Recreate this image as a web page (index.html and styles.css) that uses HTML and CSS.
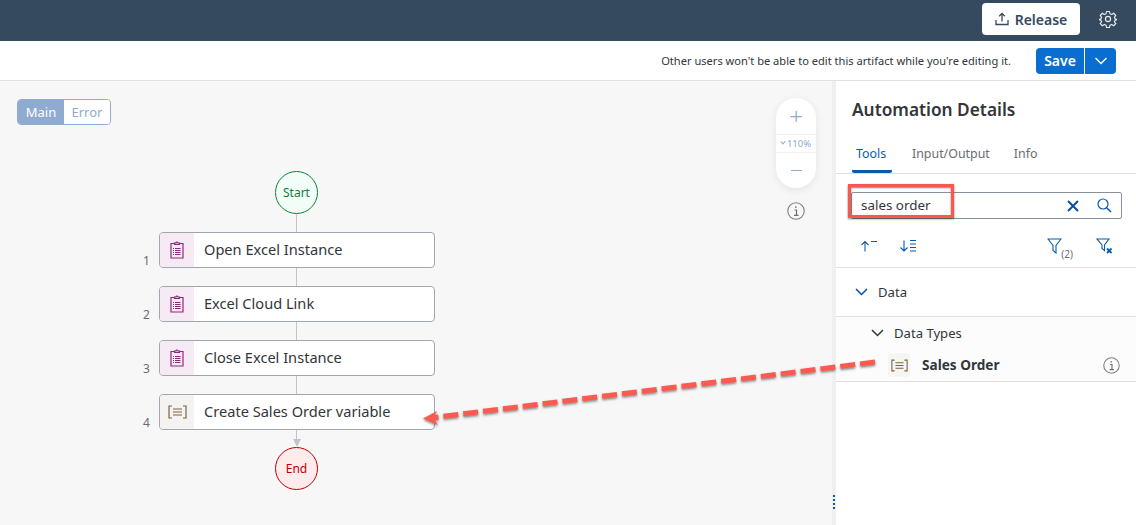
FILE: index.html
```html
<!DOCTYPE html>
<html lang="en">

<head>
    <meta charset="utf-8">
    <title>Automation Details</title>
    <link rel="stylesheet" href="styles.css">
</head>

<body>
    <header class="shell">
        <button class="release">
            <svg width="14" height="14" viewBox="0 0 14 14" fill="none" stroke="#354a5f" stroke-width="1.3">
                <path d="M7 9.5V1.5M4.2 4.2 7 1.4l2.8 2.8M1 8v4.5h12V8" />
            </svg>
            Release
        </button>
        <svg class="gear" width="18" height="18" viewBox="0 0 24 24" fill="none" stroke="#e6eaee" stroke-width="1.6">
            <circle cx="12" cy="12" r="3.4" />
            <path d="M10 2h4l.6 3 2.3 1 2.6-1.7 2.8 3-1.7 2.5.9 2.2 3 .6v0l-3 .9-.9 2.2 1.7 2.5-2.8 2.8-2.6-1.7-2.3 1-.6 3h-4l-.6-3-2.3-1-2.6 1.7-2.8-2.8 1.7-2.5-.9-2.2-3-.9 3-.6.9-2.2L1.700 7.300l2.800-3 2.600 1.700 2.300-1z" stroke-linejoin="round" />
        </svg>
    </header>

    <div class="toolbar">
        <span class="notice">Other users won't be able to edit this artifact while you're editing it.</span>
        <div class="save-group">
            <button class="save">Save</button>
            <button class="save-menu">
                <svg width="14" height="8" viewBox="0 0 14 8" fill="none" stroke="#fff" stroke-width="1.4">
                    <path d="M1.500 1 7 6.500 12.500 1" />
                </svg>
            </button>
        </div>
    </div>

    <main class="workspace">
        <section class="canvas">
            <div class="switch">
                <span class="switch-on">Main</span>
                <span class="switch-off">Error</span>
            </div>

            <div class="zoom">
                <span class="zoom-btn zoom-plus">+</span>
                <span class="zoom-level"><i class="zoom-caret"></i>110%</span>
                <span class="zoom-btn zoom-minus"></span>
            </div>
            <svg class="canvas-info" width="18" height="18" viewBox="0 0 18 18">
                <circle cx="9" cy="9" r="8.200" fill="none" stroke="#7f7f7f" stroke-width="1.100" />
                <path d="M7.500 8h2v5M7 13.300h4.500M8 5.200h1.600" fill="none" stroke="#6a6d70" stroke-width="1.200" />
            </svg>

            <div class="flow">
                <div class="terminal terminal-start">Start</div>
                <div class="link"></div>
                <div class="step">
                    <span class="step-no">1</span>
                    <span class="step-icon step-icon-excel">
                        <svg width="14" height="18" viewBox="0 0 14 18" fill="none" stroke="#8d2a7b" stroke-width="1.200">
                            <path d="M4.500 2.500H1v14.500h12V2.500H9.500M4.500 3.500V2h1.500a1 1 0 0 1 2 0h1.500v1.500zM5 7.500h5.500M5 9.500h5.500M5 11.500h5.500M5 13.500h5.500M3 7.500h1M3 9.500h1M3 11.500h1M3 13.500h1" />
                        </svg>
                    </span>
                    <span class="step-label">Open Excel Instance</span>
                </div>
                <div class="link"></div>
                <div class="step">
                    <span class="step-no">2</span>
                    <span class="step-icon step-icon-excel">
                        <svg width="14" height="18" viewBox="0 0 14 18" fill="none" stroke="#8d2a7b" stroke-width="1.200">
                            <path d="M4.500 2.500H1v14.500h12V2.500H9.500M4.500 3.500V2h1.500a1 1 0 0 1 2 0h1.500v1.500zM5 7.500h5.500M5 9.500h5.500M5 11.500h5.500M5 13.500h5.500M3 7.500h1M3 9.500h1M3 11.500h1M3 13.500h1" />
                        </svg>
                    </span>
                    <span class="step-label">Excel Cloud Link</span>
                </div>
                <div class="link"></div>
                <div class="step">
                    <span class="step-no">3</span>
                    <span class="step-icon step-icon-excel">
                        <svg width="14" height="18" viewBox="0 0 14 18" fill="none" stroke="#8d2a7b" stroke-width="1.200">
                            <path d="M4.500 2.500H1v14.500h12V2.500H9.500M4.500 3.500V2h1.500a1 1 0 0 1 2 0h1.500v1.500zM5 7.500h5.500M5 9.500h5.500M5 11.500h5.500M5 13.500h5.500M3 7.500h1M3 9.500h1M3 11.500h1M3 13.500h1" />
                        </svg>
                    </span>
                    <span class="step-label">Close Excel Instance</span>
                </div>
                <div class="link"></div>
                <div class="step">
                    <span class="step-no">4</span>
                    <span class="step-icon step-icon-data">
                        <svg width="19" height="14" viewBox="0 0 19 14" fill="none" stroke="#7d6340" stroke-width="1.200">
                            <path d="M4 1H1v12h3M15 1h3v12h-3M5 4h9M5 7h9M5 10h9" />
                        </svg>
                    </span>
                    <span class="step-label">Create Sales Order variable</span>
                </div>
                <div class="link link-last"></div>
                <div class="link-head"></div>
                <div class="terminal terminal-end">End</div>
            </div>

            <div class="grip"><i></i><i></i><i></i><i></i></div>
        </section>

        <aside class="details">
            <h2 class="details-title">Automation Details</h2>
            <nav class="tabs">
                <span class="tab tab-active">Tools</span>
                <span class="tab">Input/Output</span>
                <span class="tab">Info</span>
            </nav>

            <div class="search">
                <span class="search-text">sales order</span>
                <svg width="12" height="12" viewBox="0 0 12 12" fill="none" stroke="#0a4f9e" stroke-width="2">
                    <path d="M1 1l10 10M11 1 1 11" />
                </svg>
                <svg class="search-glass" width="15" height="15" viewBox="0 0 15 15" fill="none" stroke="#0a5cab" stroke-width="1.200">
                    <circle cx="6" cy="6" r="5" />
                    <path d="M9.700 9.700 14 14" stroke-width="1.600" />
                </svg>
            </div>

            <div class="tools">
                <svg width="18" height="12" viewBox="0 0 18 12" fill="none" stroke="#0a5cab" stroke-width="1.100">
                    <path d="M5 11.500V2M1.500 5 5 1.500 8.500 5M11 1.500h6" />
                </svg>
                <svg class="tool-sort" width="18" height="14" viewBox="0 0 18 14" fill="none" stroke="#0a5cab" stroke-width="1.100">
                    <path d="M5 1.500V12M1.500 8.500 5 12l3.500-3.500M11 1.500h6M11 5h6M11 8.500h6M11 12h6" />
                </svg>
                <span class="tools-gap"></span>
                <span class="tool-filter">
                    <svg width="15" height="16" viewBox="0 0 15 16" fill="none" stroke="#0a5cab" stroke-width="1.100">
                        <path d="M1 1h13L9 7.500V15L6 12.500v-5z" />
                    </svg>
                    <small>(2)</small>
                </span>
                <svg class="tool-clear" width="17" height="16" viewBox="0 0 17 16" fill="none" stroke="#0a5cab" stroke-width="1.100">
                    <path d="M1 1h12L8.500 7v5.500L6 10.500V7z" />
                    <path d="M11 10.500l4.500 4.500M15.500 10.500 11 15" stroke-width="1.800" />
                </svg>
            </div>

            <div class="group">
                <svg width="13" height="8" viewBox="0 0 13 8" fill="none" stroke="#0a4f9e" stroke-width="1.500">
                    <path d="M1 1l5.500 5.500L12 1" />
                </svg>
                <span>Data</span>
            </div>

            <div class="subgroup">
                <div class="subgroup-head">
                    <svg width="13" height="8" viewBox="0 0 13 8" fill="none" stroke="#32363a" stroke-width="1.500">
                        <path d="M1 1l5.500 5.500L12 1" />
                    </svg>
                    <span>Data Types</span>
                </div>
                <div class="subgroup-item">
                    <span class="item-icon">
                        <svg width="17" height="13" viewBox="0 0 19 14" fill="none" stroke="#7d6340" stroke-width="1.200">
                            <path d="M4 1H1v12h3M15 1h3v12h-3M5 4h9M5 7h9M5 10h9" />
                        </svg>
                    </span>
                    <span class="item-label">Sales Order</span>
                    <svg width="17" height="17" viewBox="0 0 18 18">
                        <circle cx="9" cy="9" r="8.200" fill="none" stroke="#7f7f7f" stroke-width="1.100" />
                        <path d="M7.500 8h2v5M7 13.300h4.500M8 5.200h1.600" fill="none" stroke="#6a6d70" stroke-width="1.200" />
                    </svg>
                </div>
            </div>
        </aside>
    </main>

    <div class="callout-box"></div>
    <svg class="callout-arrow" width="1136" height="525" viewBox="0 0 1136 525" fill="none">
        <defs>
            <filter id="arrow-shadow" x="-5%" y="-30%" width="110%" height="170%">
                <feDropShadow dx="0" dy="1.500" stdDeviation="1" flood-color="#333" flood-opacity=".6" />
            </filter>
        </defs>
        <g filter="url(#arrow-shadow)">
            <path d="M875 362 434 417.500" stroke="#fb5a50" stroke-width="5" stroke-dasharray="15 5" />
            <path d="M423 418.500 437 411 433.500 418 438 425z" fill="#fb5a50" />
        </g>
    </svg>
</body>

</html>
```
FILE: styles.css
```css
* {
    box-sizing: border-box;
}

html,
body {
    margin: 0;
    height: 525px;
    overflow: hidden;
}

body {
    font-family: "Noto Sans", "Open Sans", sans-serif;
    color: #32363a;
    background: #fff;
}

button {
    font-family: inherit;
    border: 0;
}

/* top bars */
.shell {
    height: 41px;
    background: #354a5f;
    display: flex;
    align-items: center;
    justify-content: flex-end;
    padding: 0 19px 3px 0;
}

.release {
    width: 98px;
    height: 32px;
    background: #fff;
    border-radius: 4px;
    color: #354a5f;
    font-size: 14px;
    font-weight: 600;
    display: flex;
    align-items: center;
    justify-content: center;
    gap: 6px;
}

.gear {
    margin-left: 19px;
}

.toolbar {
    height: 40px;
    border-bottom: 1px solid #e0e0e0;
    display: flex;
    align-items: center;
    justify-content: flex-end;
    padding-right: 20px;
}

.notice {
    font-size: 11.100px;
    margin-right: 25px;
    color: #32363a;
}

.save-group {
    display: flex;
    gap: 1px;
}

.save,
.save-menu {
    height: 26px;
    background: #0a6ed1;
    color: #fff;
    font-size: 14px;
    font-weight: 600;
    display: flex;
    align-items: center;
    justify-content: center;
}

.save {
    width: 48px;
    border-radius: 4px 0 0 4px;
}

.save-menu {
    width: 31px;
    border-radius: 0 4px 4px 0;
}

/* main split */
.workspace {
    display: flex;
    height: 444px;
}

.canvas {
    position: relative;
    width: 836px;
    background: #f7f7f7;
    border-right: 4px solid #eef0f2;
    padding: 90px 0 0 159px;
}

.switch {
    position: absolute;
    left: 17px;
    top: 18px;
    height: 26px;
    display: flex;
    font-size: 13px;
    border: 1px solid #8fabcf;
    border-radius: 4px;
    overflow: hidden;
}

.switch-on {
    width: 46px;
    background: #8fabcf;
    color: #fff;
    text-align: center;
    line-height: 24px;
}

.switch-off {
    width: 46px;
    background: #fff;
    color: #8fabcf;
    text-align: center;
    line-height: 24px;
}

.zoom {
    position: absolute;
    left: 776px;
    top: 17px;
    width: 40px;
    height: 90px;
    background: #fff;
    border-radius: 20px;
    box-shadow: 0 2px 8px rgba(0, 0, 0, .08);
    display: flex;
    flex-direction: column;
    color: #8fabcf;
}

.zoom-btn {
    height: 37px;
    display: flex;
    align-items: center;
    justify-content: center;
}

.zoom-plus {
    font-size: 24px;
    font-weight: 300;
}

.zoom-minus::before {
    content: "";
    width: 11px;
    height: 1.500px;
    background: #8fabcf;
}

.zoom-level {
    height: 19px;
    border-top: 1px solid #f0f0f0;
    border-bottom: 1px solid #f0f0f0;
    font-size: 9.500px;
    line-height: 17px;
    white-space: nowrap;
    display: flex;
    align-items: center;
    justify-content: center;
    gap: 2px;
}

.zoom-caret {
    width: 4px;
    height: 4px;
    border-right: 1px solid #8fabcf;
    border-bottom: 1px solid #8fabcf;
    transform: rotate(45deg) translate(-1px, -1px);
}

.canvas-info {
    position: absolute;
    left: 787px;
    top: 121px;
}

.grip {
    position: absolute;
    right: -3px;
    top: 414px;
    display: flex;
    flex-direction: column;
    gap: 2px;
}

.grip i {
    width: 2px;
    height: 2px;
    background: #0a5cab;
}

/* flow diagram */
.flow {
    width: 275px;
    display: flex;
    flex-direction: column;
    align-items: center;
}

.terminal {
    width: 43px;
    height: 43px;
    border-radius: 50%;
    font-size: 12px;
    display: flex;
    align-items: center;
    justify-content: center;
}

.terminal-start {
    border: 1px solid #107e3e;
    background: #f1fdf6;
    color: #107e3e;
}

.terminal-end {
    border: 1px solid #bb0000;
    background: #ffebeb;
    color: #bb0000;
}

.link {
    width: 1px;
    height: 18px;
    background: #c4c4c4;
}

.link-last {
    height: 9px;
}

.link-head {
    width: 0;
    height: 0;
    border-left: 4.500px solid transparent;
    border-right: 4.500px solid transparent;
    border-top: 8px solid #c4c4c4;
}

.step {
    position: relative;
    align-self: flex-start;
    width: 276px;
    height: 36px;
    background: #fff;
    border: 1px solid #a0a7af;
    border-radius: 4px;
    display: flex;
    align-items: center;
}

.step-no {
    position: absolute;
    left: -17px;
    top: 19px;
    font-size: 12px;
    color: #6a6d70;
}

.step-icon {
    width: 34px;
    height: 100%;
    border-radius: 3px 0 0 3px;
    display: flex;
    align-items: center;
    justify-content: center;
}

.step-icon-excel {
    background: #f6eaf4;
}

.step-icon-data {
    background: #f4f3f1;
}

.step-label {
    margin-left: 10px;
    padding-bottom: 2px;
    font-size: 14.600px;
}

/* right panel */
.details {
    width: 300px;
    background: #fff;
}

.details-title {
    margin: 0;
    padding: 16px 0 0 16px;
    height: 56px;
    font-size: 17.300px;
    font-weight: 600;
    line-height: 26px;
}

.tabs {
    height: 37px;
    padding-left: 16px;
    border-bottom: 1px solid #e0e0e0;
    display: flex;
    gap: 16px;
    font-size: 12.400px;
    color: #6a6d70;
}

.tab {
    height: 36px;
    line-height: 33px;
    padding: 0 4px;
}

.tab-active {
    width: 40px;
    color: #0a5cab;
    border-bottom: 3px solid #0a5cab;
    border-radius: 0 0 2px 2px;
}

.search {
    margin: 18px 14px 0 15px;
    height: 27px;
    border: 1px solid #89919a;
    border-radius: 2px;
    display: flex;
    align-items: center;
    padding: 0 9px;
}

.search-text {
    flex: 1;
    font-size: 13.400px;
    padding-bottom: 2px;
}

.search-glass {
    margin-left: 18px;
}

.tools {
    height: 49px;
    padding: 5px 23px 0 24px;
    border-bottom: 1px solid #e0e0e0;
    display: flex;
    align-items: center;
}

.tool-sort {
    margin-left: 21px;
}

.tools-gap {
    flex: 1;
}

.tool-filter {
    display: flex;
    align-items: flex-end;
    color: #6a6d70;
}

.tool-filter small {
    font-size: 10px;
    line-height: 10px;
    margin-bottom: -5px;
    margin-left: -1px;
}

.tool-clear {
    margin-left: 23px;
}

.group {
    height: 49px;
    border-bottom: 1px solid #e0e0e0;
    display: flex;
    align-items: center;
    gap: 10px;
    padding-left: 19px;
    font-size: 13.100px;
}

.subgroup {
    background: #fff;
    border-bottom: 1px solid #e0e0e0;
}

.subgroup-head {
    height: 32px;
    display: flex;
    align-items: center;
    gap: 10px;
    padding-left: 35px;
    font-size: 13.100px;
    background: #fcfcfc;
}

.subgroup-item {
    height: 32px;
    display: flex;
    align-items: center;
    padding: 0 16px 0 52px;
    background: #fcfcfc;
}

.item-icon {
    width: 22px;
    height: 24px;
    background: #f5f5f3;
    border-radius: 3px;
    display: flex;
    align-items: center;
    justify-content: center;
}

.item-label {
    flex: 1;
    margin-left: 12px;
    padding-bottom: 2px;
    font-size: 13.600px;
    font-weight: 700;
}

/* annotations pasted over the screenshot */
.callout-box {
    position: absolute;
    left: 848px;
    top: 184px;
    width: 106px;
    height: 34px;
    border: 3px solid #f9584d;
    box-shadow: inset 0 1px 2px rgba(0, 0, 0, .5), 0 1px 2px rgba(0, 0, 0, .5);
}

.callout-arrow {
    position: absolute;
    left: 0;
    top: 0;
    pointer-events: none;
}
```
